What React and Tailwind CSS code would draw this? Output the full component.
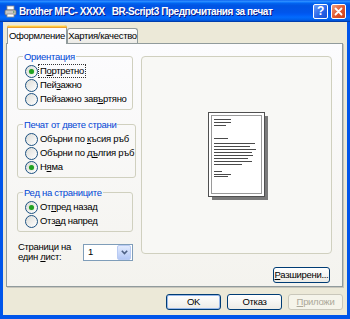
import React from 'react'

const FONT = "font-['Liberation_Sans',Arial,sans-serif]"

function Radio({ checked, focus, children }) {
    return (
        <div className="flex items-center h-[14px] pl-[7px]">
            <span className="w-[13px] h-[13px] shrink-0 rounded-full border border-[#1C5180] bg-[linear-gradient(135deg,#DCDCD7,#FFFFFF)] flex items-center justify-center">
                {checked && <span className="w-[5px] h-[5px] rounded-full bg-[#21A121] shadow-[0_0_1px_#8FD08F]" />}
            </span>
            <span className={`ml-[1px] px-[1px] leading-[12px] whitespace-nowrap ${focus ? 'outline outline-1 outline-dotted outline-[#333]' : ''}`}>{children}</span>
        </div>
    )
}

function Group({ label, children, className = '' }) {
    return (
        <fieldset className={`w-[116px] border border-[#D0D0BF] rounded-[3px] p-0 pb-[3px] overflow-hidden ${className}`}>
            <legend className="ml-[5px] px-[1px] text-[#0046D5] leading-[13px] whitespace-nowrap">{label}</legend>
            <div className="pt-[1px]">{children}</div>
        </fieldset>
    )
}

function Paper() {
    const lines = [
        [5, 7, 17], [5, 10, 17], [5, 13, 12],
        [5, 26, 14],
        [5, 31, 41], [5, 34, 36], [5, 37, 42], [5, 40, 38], [5, 43, 39], [5, 46, 34], [5, 49, 38], [5, 52, 28],
        [5, 59, 8], [5, 62, 17], [5, 64, 14],
    ]
    return (
        <svg width="62" height="90" viewBox="0 0 62 90">
            <rect x="4" y="4" width="56" height="84" fill="#7A7A7A" />
            <rect x="0.5" y="0.5" width="56" height="84" fill="#fff" stroke="#505050" />
            <rect x="3.5" y="3.5" width="50" height="78" fill="#fff" stroke="#9A9A9A" />
            {lines.map(([x, y, w], i) => (
                <rect key={i} x={x + 1} y={y} width={w} height="1" fill="#4A4A4A" />
            ))}
        </svg>
    )
}

function XPButton({ children, primary, disabled, className = '' }) {
    return (
        <button
            className={`h-[16px] rounded-[3px] border leading-[14px] whitespace-nowrap ${disabled
                ? 'border-[#C9C7BA] text-[#ACA899] bg-[#F5F4EA]'
                : 'border-[#003C74] text-black bg-[linear-gradient(#FFFFFF,#ECEBE6)]'} ${primary ? 'shadow-[inset_0_0_0_1px_#98B8EA]' : ''} ${className}`}
        >
            {children}
        </button>
    )
}

export default function App() {
    return (
        <div className={`w-[350px] h-[319px] bg-[#0055EA] flex flex-col overflow-hidden ${FONT} text-[9.5px] tracking-[-0.3px] text-black`}>
            {/* Title bar */}
            <div className="h-[22px] shrink-0 flex items-center bg-[linear-gradient(#0058EE_0%,#3593FF_5%,#127DFF_10%,#0262EE_16%,#0054E3_26%,#0055EB_56%,#005BF5_66%,#026AFE_78%,#0062EF_88%,#0052D6_94%,#003092_100%)] pl-[4px] pr-[4px]">
                <svg width="13" height="13" viewBox="0 0 13 13" className="shrink-0">
                    <rect x="3" y="1" width="7" height="4" fill="#fff" stroke="#8A8A8A" strokeWidth="0.8" />
                    <rect x="1" y="5" width="11" height="5" rx="1" fill="#C9C9C9" stroke="#6A6A6A" strokeWidth="0.8" />
                    <rect x="3" y="9" width="7" height="3" fill="#fff" stroke="#8A8A8A" strokeWidth="0.8" />
                    <rect x="9" y="6.5" width="1.5" height="1" fill="#3A8A3A" />
                </svg>
                <span className="ml-[2px] text-white font-bold text-[10px] whitespace-nowrap [text-shadow:1px_1px_0_#0A1883] tracking-[-0.45px]">
                    Brother MFC- XXXX&nbsp;&nbsp; BR-Script3 Предпочитания за печат
                </span>
                <div className="ml-auto flex gap-[3px] items-center">
                    <div className="w-[15px] h-[15px] rounded-[2px] border border-white bg-[linear-gradient(135deg,#6C9CF8,#2563E8_60%,#1D4FD0)] flex items-center justify-center text-white font-bold text-[12px] leading-none">?</div>
                    <div className="w-[15px] h-[15px] rounded-[2px] border border-white bg-[linear-gradient(135deg,#F0A080,#E0552B_55%,#C7401A)] flex items-center justify-center">
                        <svg width="9" height="9" viewBox="0 0 9 9">
                            <path d="M1.5 1.5 L7.5 7.5 M7.5 1.5 L1.5 7.5" stroke="#fff" strokeWidth="1.8" strokeLinecap="round" />
                        </svg>
                    </div>
                </div>
            </div>

            {/* Dialog body */}
            <div className="flex-1 mx-[3px] mb-[4px] bg-[#ECE9D8] flex flex-col px-[3px] pt-[3px]">
                {/* Tabs */}
                <div className="flex items-end h-[18px] pl-[1px] relative z-10">
                    <div className="h-[19px] -mb-[1px] w-[60px] border border-b-0 border-[#919B9C] rounded-t-[3px] bg-[#FCFCFE] relative flex items-center justify-center">
                        <div className="absolute -top-[1px] -left-[1px] -right-[1px] h-[3px] rounded-t-[3px] bg-[linear-gradient(#FFF0C0,#FFC83C_50%,#E68B2C)]" />
                        <span className="mt-[2px] whitespace-nowrap">Оформление</span>
                    </div>
                    <div className="h-[15px] w-[71px] border border-b-0 border-[#919B9C] rounded-t-[3px] bg-[linear-gradient(#FFFFFF,#ECEBE6)] flex items-center justify-center">
                        <span className="whitespace-nowrap">Хартия/качество</span>
                    </div>
                </div>

                {/* Tab panel */}
                <div className="w-[337px] h-[244px] border border-[#919B9C] bg-[linear-gradient(#FCFCFE,#F4F3EE)] shadow-[1px_1px_0_#C8C6BC] flex pl-[10px] pr-[10px] pt-[6px]">
                    {/* Left column */}
                    <div className="flex flex-col w-[116px] shrink-0">
                        <Group label="Ориентация">
                            <Radio checked focus>П<u>о</u>ртретно</Radio>
                            <Radio>Пей<u>з</u>ажно</Radio>
                            <Radio>Пейзажно зав<u>ъ</u>ртяно</Radio>
                        </Group>
                        <Group label="Печат от двете страни" className="mt-[8px]">
                            <Radio>Обърни по <u>к</u>ъсия ръб</Radio>
                            <Radio>Обърни по д<u>ъ</u>лгия ръб</Radio>
                            <Radio checked>Н<u>я</u>ма</Radio>
                        </Group>
                        <Group label="Ред на страниците" className="mt-[8px]">
                            <Radio checked>От<u>п</u>ред назад</Radio>
                            <Radio>Отз<u>а</u>д напред</Radio>
                        </Group>
                        <div className="flex items-center mt-[10px] pl-[1px]">
                            <div className="leading-[10px] w-[65px]">
                                Страници на<br />един <u>л</u>ист:
                            </div>
                            <div className="w-[50px] h-[17px] border border-[#7F9DB9] bg-white flex items-center">
                                <span className="flex-1 pl-[4px]">1</span>
                                <div className="w-[14px] h-[15px] mr-[1px] rounded-[2px] bg-[linear-gradient(#E2EBFE,#B4C8F6)] border border-[#B9CBF3] flex items-center justify-center">
                                    <svg width="7" height="5" viewBox="0 0 7 5">
                                        <path d="M0.8 0.8 L3.5 3.6 L6.2 0.8" stroke="#4D6185" strokeWidth="1.6" fill="none" />
                                    </svg>
                                </div>
                            </div>
                        </div>
                    </div>

                    {/* Right column */}
                    <div className="flex flex-col ml-[8px] pt-[6px] w-[192px]">
                        <div className="h-[198px] border border-[#D0D0BF] rounded-[4px] bg-[#F8F8F5] flex items-center justify-center">
                            <div className="ml-[4px] mt-[3px]">
                                <Paper />
                            </div>
                        </div>
                        <div className="flex justify-end mt-[13px] pr-[2px]">
                            <XPButton className="w-[57px]"><u>Р</u>азширени...</XPButton>
                        </div>
                    </div>
                </div>

                {/* Dialog buttons */}
                <div className="flex justify-end gap-[6px] mt-[7px] pr-[1px]">
                    <XPButton primary className="w-[55px]">OK</XPButton>
                    <XPButton className="w-[55px]">Отказ</XPButton>
                    <XPButton disabled className="w-[55px]"><u>П</u>риложи</XPButton>
                </div>
            </div>
        </div>
    )
}
